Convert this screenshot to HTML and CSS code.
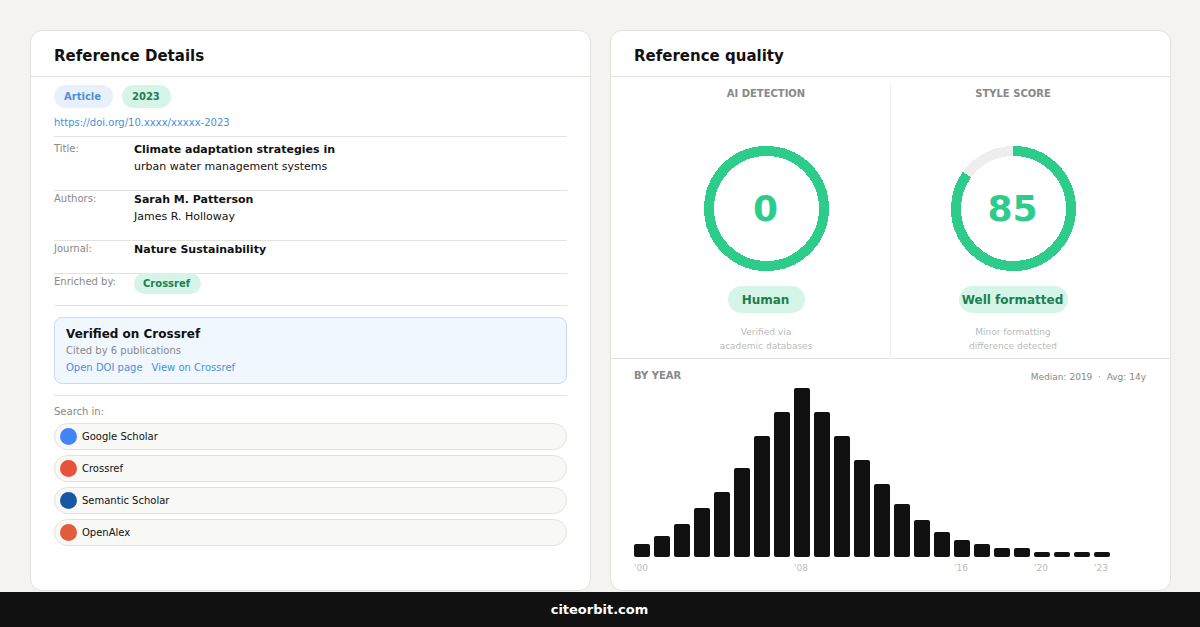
FILE: index.html
```html
<!DOCTYPE html>
<html lang="en">
<head>
  <meta charset="UTF-8">
  <title>CiteOrbit</title>
  <link rel="stylesheet" href="styles.css">
</head>

<body>
  <main class="cards">
    <!-- Reference details -->
    <section class="card">
      <h2 class="card-title">Reference Details</h2>
      <div class="details">
        <div class="tags">
          <span class="tag tag-blue">Article</span>
          <span class="tag tag-green">2023</span>
        </div>
        <a class="doi">https://doi.org/10.xxxx/xxxxx-2023</a>

        <div class="row row-title">
          <span class="label">Title:</span>
          <div class="value"><strong>Climate adaptation strategies in</strong><p>urban water management systems</p></div>
        </div>
        <div class="row row-authors">
          <span class="label">Authors:</span>
          <div class="value"><strong>Sarah M. Patterson</strong><p>James R. Holloway</p></div>
        </div>
        <div class="row row-journal">
          <span class="label">Journal:</span>
          <div class="value"><strong>Nature Sustainability</strong></div>
        </div>
        <div class="row row-enriched">
          <span class="label">Enriched by:</span>
          <span class="source">Crossref</span>
        </div>

        <div class="verified-wrap">
          <div class="verified">
            <h3>Verified on Crossref</h3>
            <p>Cited by 6 publications</p>
            <div class="links"><a>Open DOI page</a><a>View on Crossref</a></div>
          </div>
        </div>

        <div class="search">
          <p class="search-label">Search in:</p>
          <div class="engine"><span class="dot dot-google"></span>Google Scholar</div>
          <div class="engine"><span class="dot dot-crossref"></span>Crossref</div>
          <div class="engine"><span class="dot dot-semantic"></span>Semantic Scholar</div>
          <div class="engine"><span class="dot dot-openalex"></span>OpenAlex</div>
        </div>
      </div>
    </section>

    <!-- Reference quality -->
    <section class="card">
      <h2 class="card-title">Reference quality</h2>
      <div class="scores">
        <div class="score score-ai">
          <h3>AI DETECTION</h3>
          <div class="ring">
            <svg width="125" height="125" viewBox="0 0 125 125">
              <circle class="ring-value" cx="62.5" cy="62.5" r="57.5"/>
            </svg>
            <span class="ring-number">0</span>
          </div>
          <span class="verdict verdict-human">Human</span>
          <p>Verified via<br>academic databases</p>
        </div>
        <div class="divider"></div>
        <div class="score score-style">
          <h3>STYLE SCORE</h3>
          <div class="ring">
            <svg width="125" height="125" viewBox="0 0 125 125">
              <circle class="ring-track" cx="62.5" cy="62.5" r="57.5"/>
              <circle class="ring-value" cx="62.5" cy="62.5" r="57.5" pathLength="100" stroke-dasharray="85.2 100" transform="rotate(-90.6 62.5 62.5)"/>
            </svg>
            <span class="ring-number">85</span>
          </div>
          <span class="verdict verdict-style">Well formatted</span>
          <p>Minor formatting<br>difference detected</p>
        </div>
      </div>

      <div class="years">
        <div class="years-head">
          <h3>BY YEAR</h3>
          <span>Median: 2019 &nbsp;·&nbsp; Avg: 14y</span>
        </div>
        <div class="chart" id="chart"></div>
        <div class="axis" id="axis"></div>
      </div>
    </section>
  </main>

  <footer>citeorbit.com</footer>

  <script>
    const counts = [3, 5, 8, 12, 16, 22, 30, 36, 42, 36, 30, 24, 18, 13, 9, 6, 4, 3, 2, 2, 1, 1, 1, 1];
    const labels = { 0: "'00", 8: "'08", 16: "'16", 20: "'20", 23: "'23" };
    const chart = document.getElementById('chart');
    const axis = document.getElementById('axis');

    counts.forEach((count, i) => {
      chart.innerHTML += `<div class="bar" style="height: ${count * 4 + 1}px"></div>`;
      axis.innerHTML += `<span>${labels[i] || ''}</span>`;
    });
  </script>
</body>
</html>
```
FILE: styles.css
```css
* {
  box-sizing: border-box;
  margin: 0;
  padding: 0;
}

body {
  font-family: "DejaVu Sans", sans-serif;
  font-size: 10px;
  color: #111;
  background: #f4f3ef;
  height: 627px;
  overflow: hidden;
  display: flex;
  flex-direction: column;
  white-space: nowrap;
}

.cards {
  display: flex;
  gap: 19px;
  padding: 30px 29px 0 30px;
  height: 592px;
}

.card {
  width: 561px;
  height: 561px;
  background: #fff;
  border: 1px solid #e2e2de;
  border-radius: 12px;
}

.card-title {
  height: 46px;
  padding-left: 23px;
  font-size: 15px;
  line-height: 51px;
  border-bottom: 1px solid #e2e2de;
}

.details {
  padding: 8px 23px 0;
}

.tags {
  display: flex;
  gap: 9px;
}

.tag {
  height: 23px;
  padding: 0 10px;
  border-radius: 12px;
  font-weight: bold;
  line-height: 23px;
}

.tag-blue {
  width: 59px;
  color: #4a90d9;
  background: #e8f0fb;
}

.tag-green {
  width: 49px;
  color: #1e7e52;
  background: #d5f5e8;
}

.doi {
  display: block;
  height: 28px;
  line-height: 29px;
  color: #4a90d9;
}

.row {
  display: flex;
  border-top: 1px solid #e2e2de;
}

.row-title {
  height: 54px;
  padding-top: 4px;
}

.row-authors {
  height: 50px;
}

.row-journal {
  height: 33px;
}

.row-enriched {
  height: 32px;
}

.label {
  width: 80px;
  line-height: 16px;
  color: #888;
}

.value {
  font-size: 11px;
  line-height: 17px;
}

.source {
  width: 67px;
  height: 21px;
  margin-top: -1px;
  padding-left: 9px;
  border-radius: 11px;
  font-weight: bold;
  line-height: 22px;
  color: #1e7e52;
  background: #d5f5e8;
}

.verified-wrap {
  height: 90px;
  padding-top: 11px;
  border-top: 1px solid #e2e2de;
}

.verified {
  height: 67px;
  padding: 8px 11px;
  border: 1px solid #c5dcf5;
  border-radius: 8px;
  background: #f0f7ff;
}

.verified h3 {
  height: 16px;
  font-size: 12px;
  line-height: 17px;
}

.verified p {
  line-height: 17px;
  color: #888;
}

.links {
  display: flex;
  gap: 9px;
  line-height: 17px;
  color: #4a90d9;
}

.search {
  border-top: 1px solid #e2e2de;
  display: flex;
  flex-direction: column;
  gap: 5px;
}

.search-label {
  height: 22px;
  line-height: 32px;
  color: #888;
}

.engine {
  display: flex;
  align-items: center;
  gap: 5px;
  height: 27px;
  padding-left: 5px;
  border: 1px solid #e2e2de;
  border-radius: 14px;
  background: #f8f8f6;
}

.dot {
  width: 17px;
  height: 17px;
  border-radius: 50%;
}

.dot-google {
  background: #4285f4;
}

.dot-crossref {
  background: #e8523a;
}

.dot-semantic {
  background: #1857a4;
}

.dot-openalex {
  background: #e05c3a;
}

.scores {
  display: flex;
  height: 282px;
  border-bottom: 1px solid #e2e2de;
}

.score {
  display: flex;
  flex-direction: column;
  align-items: center;
  padding-top: 8px;
  text-align: center;
}

.score-ai {
  width: 279px;
  padding-left: 32px;
}

.score-style {
  width: 245px;
}

.divider {
  width: 1px;
  height: 273px;
  margin-top: 7px;
  background: #eee;
}

.score h3 {
  padding-right: 1px;
  font-size: 10px;
  line-height: 17px;
  color: #888;
}

.ring {
  display: grid;
  place-items: center;
  margin-top: 44px;
}

.ring svg,
.ring-number {
  grid-area: 1 / 1;
}

.ring circle {
  fill: none;
  stroke-width: 10;
  shape-rendering: crispEdges;
}

.ring-track {
  stroke: #eee;
}

.ring-value {
  stroke: #2ecc8a;
}

.ring-number {
  padding-right: 2px;
  font-size: 36px;
  font-weight: bold;
  color: #2ecc8a;
}

.verdict {
  height: 27px;
  margin: 15px 0 12px;
  padding-right: 2px;
  border-radius: 14px;
  font-size: 12px;
  font-weight: bold;
  line-height: 28px;
  color: #1e7e52;
  background: #d5f5e8;
}

.verdict-human {
  width: 77px;
}

.verdict-style {
  width: 109px;
}

.score p {
  padding-right: 1px;
  font-size: 9px;
  line-height: 14px;
  color: #bbb;
}

.years {
  padding: 0 23px;
}

.years-head {
  display: flex;
  justify-content: space-between;
  height: 29px;
  line-height: 36px;
  color: #888;
}

.years-head h3 {
  font-size: 10px;
  line-height: 34px;
}

.years-head span {
  padding-right: 1px;
  font-size: 9px;
}

.chart {
  display: flex;
  align-items: flex-end;
  gap: 4px;
  height: 169px;
}

.bar {
  width: 16px;
  border-radius: 2px;
  background: #111;
}

.axis {
  display: flex;
  font-size: 9px;
  line-height: 22px;
  color: #bbb;
}

.axis span {
  width: 20px;
}

footer {
  height: 35px;
  padding-right: 1px;
  font-size: 13px;
  font-weight: bold;
  line-height: 35px;
  text-align: center;
  color: #fff;
  background: #111;
}
```
